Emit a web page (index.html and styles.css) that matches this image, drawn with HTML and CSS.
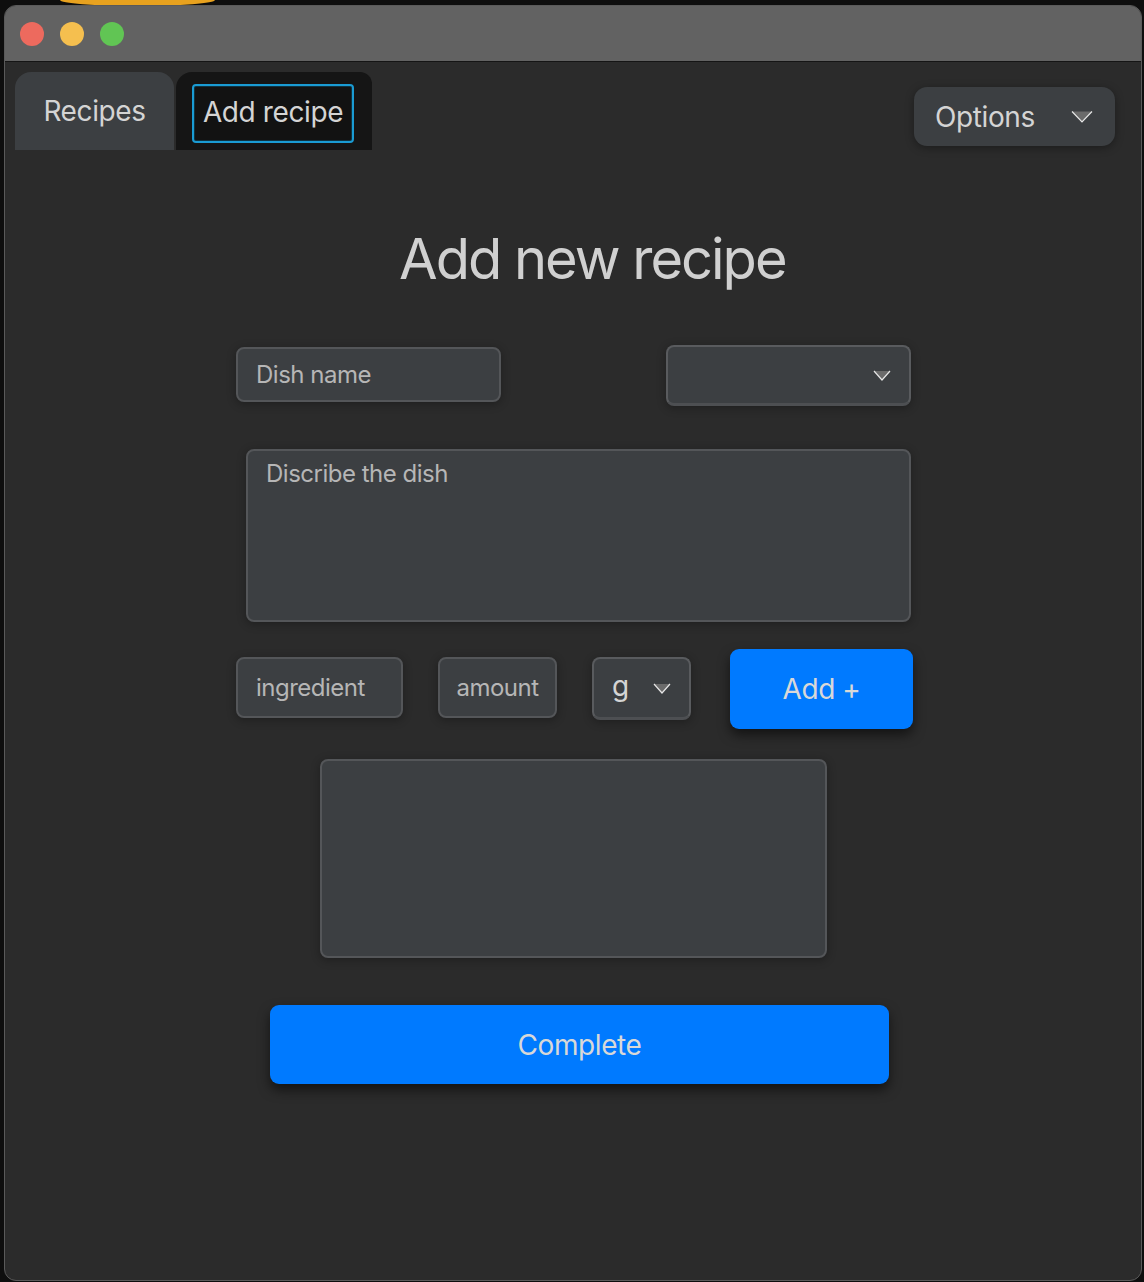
FILE: index.html
```html
<!DOCTYPE html>
<html lang="en">
<head>
<meta charset="utf-8">
<title>Add recipe</title>
<link rel="stylesheet" href="styles.css">
</head>
<body>
<div class="wallpaper"></div>
<div class="window">
  <div class="titlebar">
    <span class="light red"></span>
    <span class="light yellow"></span>
    <span class="light green"></span>
  </div>
  <div class="tabbar">
    <div class="tab tab-idle">Recipes</div>
    <div class="tab tab-active"><span class="focus">Add recipe</span></div>
    <div class="options">
      <span>Options</span>
      <svg class="chev" width="22" height="13" viewBox="0 0 22 13"><path d="M1 1.5 L21 1.5 L11 12 Z" fill="#6b6b6b"/><path d="M1 1.5 L11 12 L21 1.5" fill="none" stroke="#e6e6e6" stroke-width="1.2"/></svg>
    </div>
  </div>
  <main class="content">
    <h1 class="heading">Add new recipe</h1>
    <div class="row row-top">
      <div class="field dish">Dish name</div>
      <div class="select cat">
        <svg class="chev" width="18" height="11" viewBox="0 0 18 11"><path d="M1 1 L17 1 L9 10 Z" fill="#6b6b6b"/><path d="M1 1 L9 10 L17 1" fill="none" stroke="#e6e6e6" stroke-width="1.2"/></svg>
      </div>
    </div>
    <div class="field describe">Discribe the dish</div>
    <div class="row row-ing">
      <div class="field ingredient">ingredient</div>
      <div class="field amount">amount</div>
      <div class="select unit">
        <span class="unit-val">g</span>
        <svg class="chev" width="18" height="11" viewBox="0 0 18 11"><path d="M1 1 L17 1 L9 10 Z" fill="#6b6b6b"/><path d="M1 1 L9 10 L17 1" fill="none" stroke="#e6e6e6" stroke-width="1.2"/></svg>
      </div>
      <div class="btn add">Add +</div>
    </div>
    <div class="field list"></div>
    <div class="btn complete">Complete</div>
  </main>
</div>
</body>
</html>
```

FILE: styles.css
```css
* { box-sizing: border-box; }
html, body { margin: 0; padding: 0; }
body {
  background: #0e0e0e;
  width: 1144px;
  height: 1282px;
  overflow: hidden;
  font-family: Inter, "Noto Sans", "Liberation Sans", sans-serif;
  position: relative;
}
.wallpaper {
  position: absolute;
  left: 60px;
  top: -6px;
  width: 155px;
  height: 12px;
  border-radius: 50%;
  background: #e8a21f;
}
.window {
  position: relative;
  margin: 5px 2px 0 4px;
  height: 1276px;
  border: 1px solid #5a5a5a;
  border-radius: 12px;
  background: #2b2b2b;
  overflow: hidden;
}
.titlebar {
  height: 56px;
  background: #626262;
  border-bottom: 1px solid #151515;
  display: flex;
  align-items: center;
  gap: 16px;
  padding-left: 15px;
}
.light {
  width: 24px;
  height: 24px;
  border-radius: 50%;
  display: block;
}
.red { background: #ed6a5e; }
.yellow { background: #f5bf4f; }
.green { background: #61c554; }

.tabbar {
  display: flex;
  align-items: flex-start;
  padding: 10px 26px 0 10px;
  height: 89px;
}
.tab {
  height: 78px;
  display: flex;
  align-items: center;
  justify-content: center;
  font-size: 28px;
  color: #d4d4d4;
  letter-spacing: -0.4px;
  border-radius: 16px 16px 0 0;
}
.tab-idle {
  width: 159px;
  background: #3c3f42;
}
.tab-active {
  width: 196px;
  margin-left: 2px;
  background: #151515;
  border-radius: 16px 12px 0 0;
  align-items: flex-start;
  justify-content: flex-start;
  padding: 12px 0 0 16px;
}
.focus {
  width: 162px;
  height: 59px;
  border: 2px solid #1a9bd3;
  border-radius: 4px;
  box-shadow: inset 0 0 0 1px #0f3340;
  display: flex;
  align-items: center;
  justify-content: center;
  padding-bottom: 3px;
  background: #121212;
}
.options {
  margin-left: auto;
  margin-top: 15px;
  width: 201px;
  height: 59px;
  background: #3c3f42;
  border-radius: 13px;
  display: flex;
  align-items: center;
  justify-content: space-between;
  padding: 0 22px 0 21px;
  font-size: 28px;
  color: #d4d4d4;
  letter-spacing: -0.4px;
  box-shadow: 0 2px 8px rgba(0,0,0,0.35);
}
.chev { display: block; }

.content {
  padding-top: 0;
}
.heading {
  margin: 73px 0 0 0;
  padding-left: 394px;
  height: 70px;
  line-height: 70px;
  font-size: 56px;
  font-weight: 400;
  color: #d0d0d0;
  letter-spacing: -2px;
}
.row {
  display: flex;
  align-items: center;
}
.field {
  background: #3c3f42;
  border: 2px solid #545659;
  border-radius: 8px;
  color: #b6b6b6;
  font-size: 24px;
  letter-spacing: -0.5px;
  box-shadow: 0 2px 10px rgba(0,0,0,0.3);
}
.row-top {
  margin-top: 51px;
  padding-left: 231px;
  height: 61px;
}
.dish {
  width: 265px;
  height: 55px;
  display: flex;
  align-items: center;
  padding-left: 18px;
  margin-top: -2px;
}
.select {
  background: #3c3f42;
  border: 2px solid #595b5e;
  border-bottom: 3px solid #4d4f52;
  border-radius: 8px;
  display: flex;
  align-items: center;
  box-shadow: 0 2px 10px rgba(0,0,0,0.3);
}
.cat {
  margin-left: 165px;
  width: 245px;
  height: 61px;
  justify-content: flex-end;
  padding-right: 18px;
}
.describe {
  margin: 43px 0 0 241px;
  width: 665px;
  height: 173px;
  padding: 6px 0 0 18px;
  line-height: 34px;
}
.row-ing {
  margin-top: 27px;
  padding-left: 231px;
  height: 80px;
  align-items: flex-start;
}
.ingredient {
  width: 167px;
  height: 61px;
  display: flex;
  align-items: center;
  padding-left: 18px;
  margin-top: 8px;
}
.amount {
  margin-left: 35px;
  width: 119px;
  height: 61px;
  display: flex;
  align-items: center;
  justify-content: center;
  margin-top: 8px;
}
.unit {
  margin-left: 35px;
  width: 99px;
  height: 63px;
  padding: 0 18px 0 18px;
  justify-content: space-between;
  margin-top: 8px;
}
.unit-val {
  font-size: 28px;
  color: #d4d4d4;
  margin-top: -4px;
}
.btn {
  background: #007aff;
  border-radius: 9px;
  color: #d8d8d8;
  display: flex;
  align-items: center;
  justify-content: center;
  letter-spacing: -0.4px;
  box-shadow: 0 6px 12px rgba(0,0,0,0.55);
}
.add {
  margin-left: 39px;
  width: 183px;
  height: 80px;
  font-size: 28px;
}
.list {
  margin: 30px 0 0 315px;
  width: 507px;
  height: 199px;
}
.complete {
  margin: 47px 0 0 265px;
  width: 619px;
  height: 79px;
  font-size: 28px;
}
```
